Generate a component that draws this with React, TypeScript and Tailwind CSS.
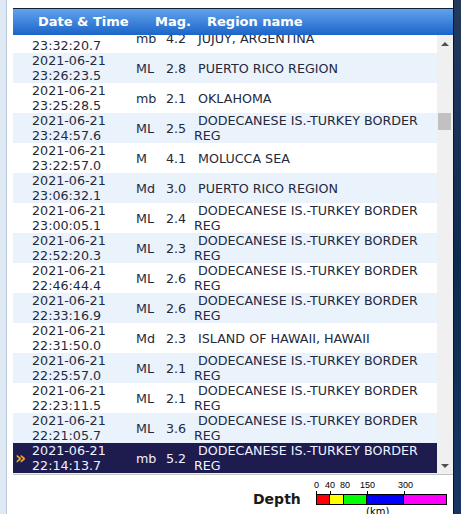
const DODEC = ["DODECANESE IS.-TURKEY BORDER", "REG"];

interface Quake {
  date: string;
  time: string;
  type: string;
  mag: string;
  region: string[];
}

const quakes: Quake[] = [
  { date: "2021-06-21", time: "23:32:20.7", type: "mb", mag: "4.2", region: ["JUJUY, ARGENTINA"] },
  { date: "2021-06-21", time: "23:26:23.5", type: "ML", mag: "2.8", region: ["PUERTO RICO REGION"] },
  { date: "2021-06-21", time: "23:25:28.5", type: "mb", mag: "2.1", region: ["OKLAHOMA"] },
  { date: "2021-06-21", time: "23:24:57.6", type: "ML", mag: "2.5", region: DODEC },
  { date: "2021-06-21", time: "23:22:57.0", type: "M", mag: "4.1", region: ["MOLUCCA SEA"] },
  { date: "2021-06-21", time: "23:06:32.1", type: "Md", mag: "3.0", region: ["PUERTO RICO REGION"] },
  { date: "2021-06-21", time: "23:00:05.1", type: "ML", mag: "2.4", region: DODEC },
  { date: "2021-06-21", time: "22:52:20.3", type: "ML", mag: "2.3", region: DODEC },
  { date: "2021-06-21", time: "22:46:44.4", type: "ML", mag: "2.6", region: DODEC },
  { date: "2021-06-21", time: "22:33:16.9", type: "ML", mag: "2.6", region: DODEC },
  { date: "2021-06-21", time: "22:31:50.0", type: "Md", mag: "2.3", region: ["ISLAND OF HAWAII, HAWAII"] },
  { date: "2021-06-21", time: "22:25:57.0", type: "ML", mag: "2.1", region: DODEC },
  { date: "2021-06-21", time: "22:23:11.5", type: "ML", mag: "2.1", region: DODEC },
  { date: "2021-06-21", time: "22:21:05.7", type: "ML", mag: "3.6", region: DODEC },
  { date: "2021-06-21", time: "22:14:13.7", type: "mb", mag: "5.2", region: DODEC },
  { date: "2021-06-21", time: "22:10:41.2", type: "ML", mag: "2.2", region: ["CRETE, GREECE"] },
];

const SELECTED = 14;

function Row({ q, i }: { q: Quake; i: number }) {
  const selected = i === SELECTED;
  const bg = selected
    ? "bg-[#1e1b4f] text-[#eef2ff]"
    : i % 2 === 1
      ? "bg-[#eaf2fc] text-[#1f2a3c]"
      : "bg-white text-[#1f2a3c]";
  return (
    <div className={`flex h-[30px] items-center leading-[15px] ${bg}`}>
      <div className="w-[19px] shrink-0 pl-[2px] text-[17px] font-bold leading-[15px] text-[#f5a623]">{selected ? "»" : ""}</div>
      <div className="w-[104px] shrink-0">
        <div>{q.date}</div>
        <div>{q.time}</div>
      </div>
      <div className="w-[30px] shrink-0">{q.type}</div>
      <div className="w-[28px] shrink-0">{q.mag}</div>
      <div className="w-[243px] shrink-0">
        <div className="whitespace-nowrap">{"\u00a0" + q.region[0]}</div>
        {q.region[1] && <div>{q.region[1]}</div>}
      </div>
    </div>
  );
}

function Scrollbar() {
  return (
    <div className="relative w-[16px] shrink-0 bg-[#f0f0f0]">
      <div className="absolute left-[4px] top-[7px] h-0 w-0 border-x-[4px] border-b-[4px] border-x-transparent border-b-[#505050]" />
      <div className="absolute left-[1px] top-[78px] h-[17px] w-[13px] bg-[#c1c1c1]" />
      <div className="absolute bottom-[6px] left-[4px] h-0 w-0 border-x-[4px] border-t-[4px] border-x-transparent border-t-[#505050]" />
    </div>
  );
}

function DepthLegend() {
  return (
    <div className="flex items-start pl-[240px] pt-[6px]">
      <div className="mt-[8px] w-[58px] text-[14px] font-bold text-[#1a1a1a]">Depth</div>
      <div className="relative ml-[5px] w-[131px]">
        <div className="relative h-[13px] font-['Liberation_Sans',sans-serif] text-[9px] leading-[9px] text-black">
          <span className="absolute left-[-2px] top-0">0</span>
          <span className="absolute left-[9px] top-0">40</span>
          <span className="absolute left-[24px] top-0">80</span>
          <span className="absolute left-[44px] top-0">150</span>
          <span className="absolute left-[82px] top-0">300</span>
          <span className="absolute bottom-0 left-0 h-[3px] w-px bg-black" />
          <span className="absolute bottom-0 left-[14px] h-[3px] w-px bg-black" />
          <span className="absolute bottom-0 left-[51px] h-[3px] w-px bg-black" />
          <span className="absolute bottom-0 left-[88px] h-[3px] w-px bg-black" />
        </div>
        <div className="flex h-[11px] border border-black">
          <div className="w-[13px] border-r border-black bg-[#ff0000]" />
          <div className="w-[14px] border-r border-black bg-[#ffff00]" />
          <div className="w-[23px] border-r border-black bg-[#00ff00]" />
          <div className="w-[37px] border-r border-black bg-[#0000ff]" />
          <div className="flex-1 bg-[#ff00ff]" />
        </div>
        <div className="pl-[50px] pt-[2px] text-[10px] leading-[10px] text-black">(km)</div>
      </div>
    </div>
  );
}

export default function App() {
  return (
    <div className="flex h-[514px] w-[461px] overflow-hidden bg-white font-['DejaVu_Sans',sans-serif] text-[12.7px]">
      <div className="w-[7px] shrink-0 border-r border-[#b9c9d9] bg-[#dfe9f3]" />
      <div className="flex w-[446px] shrink-0 flex-col pl-[6px] pt-[8px]">
        <div className="flex h-[27px] shrink-0 items-center border-t border-[#10203a] bg-gradient-to-b from-[#5fa3ec] to-[#1b64c9] text-[13px] font-bold text-white">
          <div className="w-[25px]" />
          <div className="w-[117px]">Date &amp; Time</div>
          <div className="w-[52px]">Mag.</div>
          <div>Region name</div>
        </div>
        <div className="flex h-[440px] shrink-0 overflow-hidden border-b border-[#c4c4c4]">
          <div className="w-[424px] shrink-0 overflow-hidden">
            <div className="-mt-[12px]">
              {quakes.map((q, i) => (
                <Row key={i} q={q} i={i} />
              ))}
            </div>
          </div>
          <Scrollbar />
        </div>
        <DepthLegend />
      </div>
      <div className="w-[8px] shrink-0 border-l border-[#0a1528] bg-gradient-to-b from-[#243a5c] via-[#0f2a52] to-[#1a3560]" />
    </div>
  );
}
